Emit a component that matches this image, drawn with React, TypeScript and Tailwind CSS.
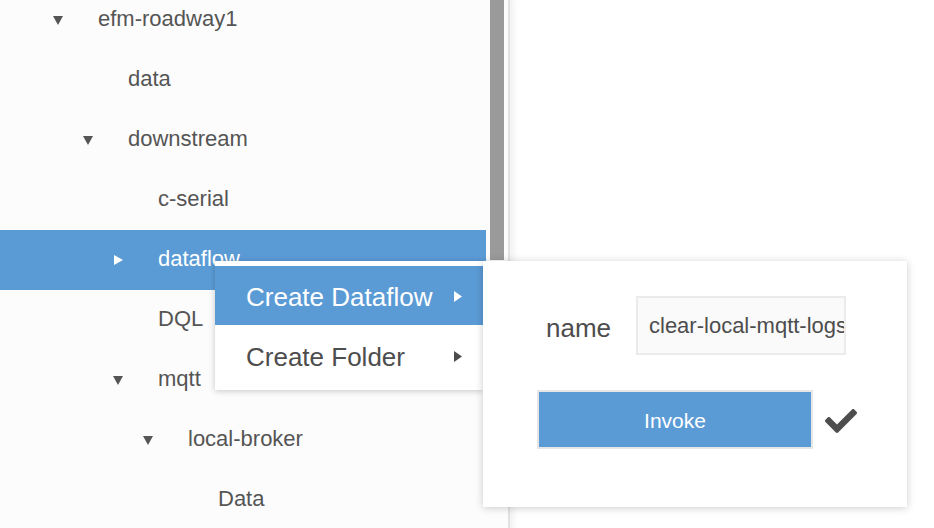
import { FaCheck } from "react-icons/fa";

type Node = { label: string; level: number; arrow?: "down" | "right"; selected?: boolean };

const nodes: Node[] = [
  { label: "efm-roadway1", level: 0, arrow: "down" },
  { label: "data", level: 1 },
  { label: "downstream", level: 1, arrow: "down" },
  { label: "c-serial", level: 2 },
  { label: "dataflow", level: 2, arrow: "right", selected: true },
  { label: "DQL", level: 2 },
  { label: "mqtt", level: 2, arrow: "down" },
  { label: "local-broker", level: 3, arrow: "down" },
  { label: "Data", level: 4 },
];

const indent = ["pl-[53px]", "pl-[83px]", "pl-[113px]", "pl-[143px]", "pl-[173px]"];

const Arrow = ({ dir, white }: { dir?: "down" | "right"; white?: boolean }) => {
  if (!dir) return <span className="w-[10px] shrink-0" />;
  const fill = white ? "#ffffff" : "#555555";
  return (
    <svg width="10" height="10" viewBox="0 0 10 10" className="shrink-0 mt-[2px]">
      {dir === "down" ? (
        <polygon points="0,1 10,1 5,10" fill={fill} />
      ) : (
        <polygon points="1,0 10,5 1,10" fill={fill} />
      )}
    </svg>
  );
};

const MenuArrow = ({ white }: { white?: boolean }) => (
  <svg width="8" height="11" viewBox="0 0 8 11">
    <polygon points="0,0 8,5.5 0,11" fill={white ? "#ffffff" : "#4d4d4d"} />
  </svg>
);

export default function App() {
  return (
    <div
      className="relative w-[934px] h-[528px] overflow-hidden bg-white text-[#555]"
      style={{ fontFamily: '"Liberation Sans", Arial, sans-serif' }}
    >
      <div className="flex h-full">
        {/* Tree */}
        <div className="w-[486px] h-full bg-[#fcfcfc] overflow-hidden">
          <div className="-mt-[10px]">
            {nodes.map((n) => (
              <div
                key={n.label}
                className={`flex items-center h-[60px] pb-[2px] ${indent[n.level]} ${
                  n.selected ? "bg-[#5b9bd5] text-white" : ""
                }`}
              >
                <Arrow dir={n.arrow} white={n.selected} />
                <span className="ml-[35px] text-[22px] leading-none">{n.label}</span>
              </div>
            ))}
          </div>
        </div>

        {/* Scrollbar */}
        <div className="w-[22px] h-full bg-[#fcfcfc] flex">
          <div className="ml-[4px] w-[14px] h-[260px] bg-[#9a9a9a]" />
        </div>
        <div className="w-[2px] h-full bg-[#e2e2e2]" />

        {/* Right side */}
        <div className="flex-1 h-full bg-white shadow-[inset_8px_0_8px_-6px_rgba(0,0,0,0.08)]" />
      </div>

      {/* Context menu */}
      <div className="absolute left-[215px] top-[261px] w-[268px] py-[5px] bg-white shadow-[0_1px_6px_rgba(0,0,0,0.22)]">
        <div className="flex items-center justify-between h-[59px] pl-[31px] pr-[21px] pt-[2px] bg-[#5b9bd5] text-white">
          <span className="text-[26px] leading-none">Create Dataflow</span>
          <MenuArrow white />
        </div>
        <div className="flex items-center justify-between h-[59px] pl-[31px] pr-[21px] pt-[2px] mt-[1px]">
          <span className="text-[26px] leading-none text-[#4d4d4d]">Create Folder</span>
          <MenuArrow />
        </div>
      </div>

      {/* Invoke popup */}
      <div className="absolute left-[483px] top-[261px] w-[424px] h-[246px] bg-white shadow-[0_1px_8px_rgba(0,0,0,0.2)]">
        <div className="flex items-center pt-[35px] pl-[63px]">
          <span className="w-[90px] text-[26px] leading-none text-[#4d4d4d] pt-[4px]">name</span>
          <div className="w-[210px] h-[59px] flex items-center pl-[11px] pt-[1px] overflow-hidden whitespace-nowrap bg-[#fafafa] border-2 border-[#ebebeb]">
            <span className="text-[22px] leading-none text-[#4d4d4d]">clear-local-mqtt-logs</span>
          </div>
        </div>
        <div className="flex items-center pt-[35px] pl-[54px]">
          <button className="w-[276px] h-[59px] pt-[2px] bg-[#5b9bd5] border-2 border-[#e6e6e6] text-white text-[21px] leading-none">
            Invoke
          </button>
          <FaCheck className="ml-[12px] mt-[2px]" size={32} color="#4d4d4d" />
        </div>
      </div>
    </div>
  );
}
